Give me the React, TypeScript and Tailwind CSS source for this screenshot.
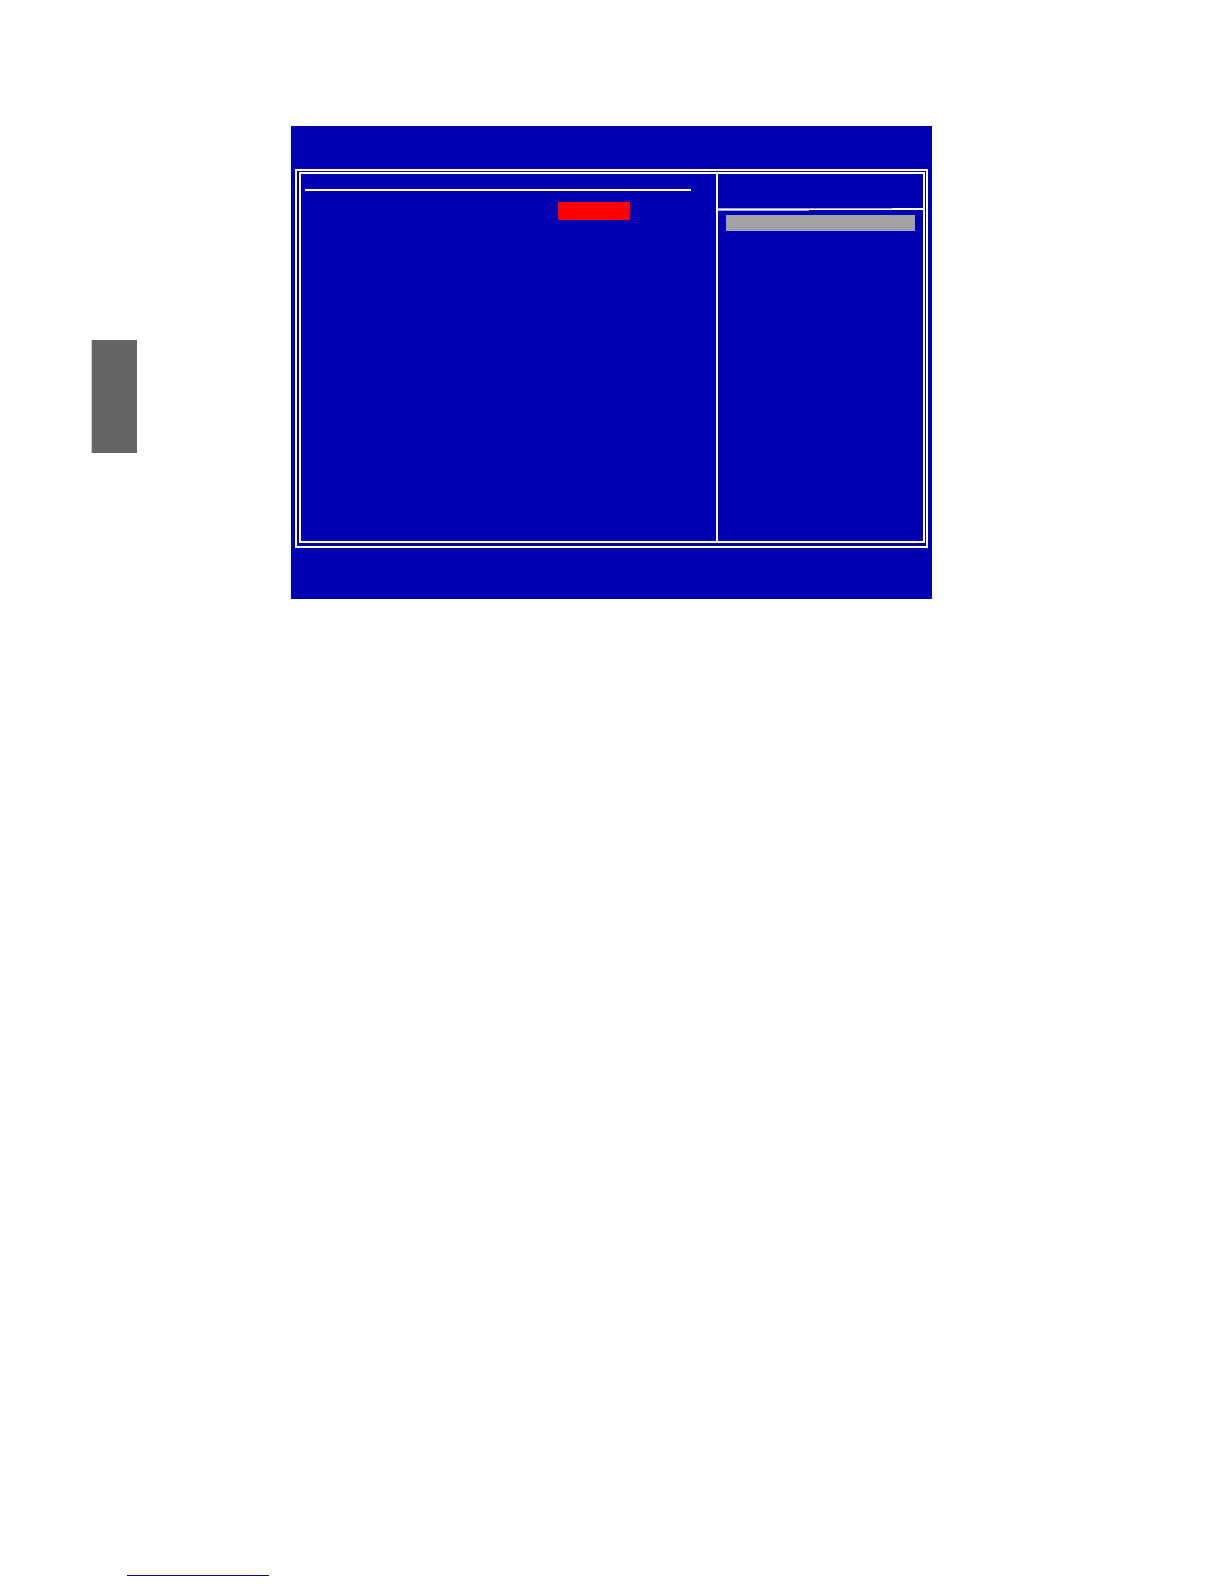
function SetupMenu() {
  return (
    <section className="min-w-0 flex-1 pr-[9px] pl-1">
      <div className="mt-[15px] mr-4 h-0.5 bg-white" />
      {/* highlighted value */}
      <div className="mt-[11px] mr-[77px] ml-auto h-[18px] w-[72px] bg-[#ff0000]" />
    </section>
  );
}

function ItemHelp() {
  return (
    <aside className="w-[207px] shrink-0 border-l-2 border-white">
      <div className="h-[34px]" />
      <div className="flex h-[3px]">
        <div className="w-[91px] border-y border-[#a0a0e4] bg-white" />
        <div className="w-[83px] border-t border-b border-t-[#a0a0e4] border-b-[#0000b3] bg-white" />
        <div className="flex-1 border-b border-[#0000b3] bg-white" />
      </div>
      <div className="mx-2 mt-1 h-4 border-b border-[#9b9bd0] bg-[#a2a2a2]" />
    </aside>
  );
}

function BiosScreen() {
  return (
    <main className="min-w-0 flex-1 border-b border-[#00009c] bg-[#0000b3] px-1 pt-[43px] pb-[50px]">
      {/* double frame */}
      <div className="border-2 border-white bg-[#00009c] pt-px pr-px pb-[3px] pl-0.5">
        <div className="flex min-h-[371px] border-2 border-white bg-[#0000b3]">
          <SetupMenu />
          <ItemHelp />
        </div>
      </div>
    </main>
  );
}

export default function App() {
  return (
    <div className="flex min-h-screen flex-col bg-white">
      <div className="flex pt-[126px]">
        <div className="w-[291px] shrink-0 pt-[214px] pl-[91px]">
          {/* chapter tab */}
          <div className="h-[113px] w-[46px] border-l border-[#cfcfcf] bg-[#656567]" />
        </div>
        <BiosScreen />
        <div className="w-[292px] shrink-0" />
      </div>
      <footer className="mt-auto pb-2 pl-[127px]">
        <div className="h-px w-[142px] bg-[#0a0a96]" />
      </footer>
    </div>
  );
}
